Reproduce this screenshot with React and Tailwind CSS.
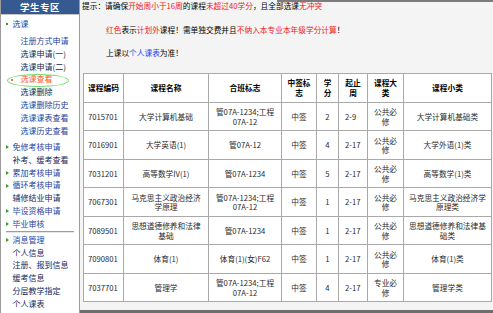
const FONT = "font-['Noto_Sans_CJK_SC','Noto_Sans',sans-serif]";

const rows = [
    ["7015701", "大学计算机基础", ["管07A-1234;工程", "07A-12"], "中签", "2", "2-9", "公共必修", ["大学计算机基础类"]],
    ["7016901", "大学英语(1)", ["管07A-12"], "中签", "4", "2-17", "公共必修", ["大学外语(1)类"]],
    ["7031201", "高等数学IV(1)", ["管07A-1234"], "中签", "5", "2-17", "公共必修", ["高等数学(1)类"]],
    ["7067301", ["马克思主义政治经济", "学原理"], ["管07A-1234;工程", "07A-12"], "中签", "1", "2-17", "公共必修", ["马克思主义政治经济学", "原理类"]],
    ["7089501", ["思想道德修养和法律", "基础"], ["管07A-1234"], "中签", "1", "2-17", "公共必修", ["思想道德修养和法律基", "础类"]],
    ["7090801", "体育(1)", ["体育(1)(女)F62"], "中签", "1", "2-17", "公共必修", ["体育(1)类"]],
    ["7037701", "管理学", ["管07A-1234;工程", "07A-12"], "中签", "4", "2-17", "专业必修", ["管理学类"]],
];

const Lines = ({ value }) => {
    const list = Array.isArray(value) ? value : [value];
    return list.map((l, i) => (
        <span key={i}>
            {i > 0 && <br />}
            {l}
        </span>
    ));
};

const Item = ({ children, sub, color = "text-[#1f44a0]", bullet, className = "" }) => (
    <div className={`flex items-center h-[12.8px] leading-[12.8px] whitespace-nowrap ${sub ? "pl-[19.5px]" : "pl-[5px]"} ${color} ${className}`}>
        {bullet === "tri" && (
            <span className="w-0 h-0 mr-[3.5px] border-y-[2.5px] border-y-transparent border-l-[3px] border-l-[#3c9a2c]" />
        )}
        {bullet === "square" && <span className="w-[2px] h-[2px] mr-[4.5px] bg-[#3c9a2c]" />}
        {!bullet && !sub && <span className="w-[6.5px]" />}
        {children}
    </div>
);

const Sidebar = () => (
    <div className="relative w-[80px] shrink-0 bg-white border-l border-r border-[#9c9c9c] text-[8px]">
        <div className="h-[15px] bg-[#365a90] border-b border-[#c4c4c4] text-white text-center font-bold text-[9.5px] leading-[15px] tracking-[0.5px]">
            学生专区
        </div>
        <Item bullet="square" className="mt-[3px]">选课</Item>
        <Item sub className="mt-[4.2px]">注册方式申请</Item>
        <Item sub color="text-[#1a1e3a]">选课申请(一)</Item>
        <Item sub color="text-[#1a1e3a]">选课申请(二)</Item>
        <div className="flex items-center h-[12.8px] leading-[12.8px] pl-[10px] text-[#ff5a1e] whitespace-nowrap">
            <span className="w-[2px] h-[2px] mr-[7.5px] bg-[#f23a2a] rounded-full" />
            选课查看
        </div>
        <Item sub color="text-[#1a1e3a]">选课删除</Item>
        <Item sub>选课删除历史</Item>
        <Item sub>选课课表查看</Item>
        <Item sub>选课历史查看</Item>
        <Item bullet="tri" className="mt-[3.6px]">免修考核申请</Item>
        <Item color="text-[#1a2758]">补考、缓考查看</Item>
        <Item bullet="tri">累加考核申请</Item>
        <Item bullet="tri">循环考核申请</Item>
        <Item color="text-[#1a2758]">辅修结业申请</Item>
        <Item bullet="tri">毕设资格申请</Item>
        <Item bullet="tri">毕业审核</Item>
        <div className="h-[3.2px] flex items-center">
            <div className="mx-[5px] flex-1 border-t border-[#9c9c9c] border-b border-b-[#e6e6e6]" />
        </div>
        <Item bullet="tri">消息管理</Item>
        <Item color="text-[#1a2758]">个人信息</Item>
        <Item color="text-[#1a2758]">注册、报到信息</Item>
        <Item color="text-[#1a2758]">缓考信息</Item>
        <Item color="text-[#1a2758]">分层教学指定</Item>
        <Item color="text-[#1a2758]">个人课表</Item>
        {/* highlight ring */}
        <div className="absolute left-[6px] top-[73.5px] w-[62px] h-[13.5px] rounded-[50%] border border-[#74dc6c]" />
    </div>
);

const th = "border border-[#a9a9a9] bg-white font-bold text-black text-center leading-[9.5px] p-0";
const td = "border border-[#a9a9a9] bg-white text-[#2a2a2a] leading-[9.5px] p-0";

export default function App() {
    return (
        <div className={`relative w-[493px] h-[313px] flex flex-col overflow-hidden bg-[#f4f4f4] ${FONT}`}>
            <div className="absolute top-0 right-0 w-[216px] h-[2px] bg-[#7c7c7c]" />
            <div className="flex flex-1 min-h-0">
                <Sidebar />
                <div className="flex-1 flex flex-col bg-[#f4f4f4] text-[7.7px] text-black">
                    <p className="h-[12px] leading-[12px] pl-[2px] whitespace-nowrap">
                        提示：请确保<span className="text-[#f02020]">开始周小于16周</span>的课程
                        <span className="text-[#f02020]">未超过40学分</span>，且全部选课
                        <span className="text-[#f02020]">无冲突</span>
                    </p>
                    <p className="h-[12px] leading-[12px] mt-[12px] pl-[26px] whitespace-nowrap">
                        <span className="text-[#f02020]">红色</span>表示<span className="text-[#f02020]">计划外</span>
                        课程！需单独交费并且<span className="text-[#f02020]">不纳入本专业本年级学分计算</span>！
                    </p>
                    <p className="h-[12px] leading-[12px] mt-[10.7px] pl-[26px] whitespace-nowrap">
                        上课以<span className="text-[#2a3cf0]">个人课表</span>为准！
                    </p>
                    <table className="mt-[14.3px] ml-[3px] w-[408px] table-fixed border-collapse border border-[#8c8c8c] text-[7.7px]">
                        <colgroup>
                            <col className="w-[40px]" />
                            <col className="w-[85px]" />
                            <col className="w-[73px]" />
                            <col className="w-[35px]" />
                            <col className="w-[22px]" />
                            <col className="w-[29px]" />
                            <col className="w-[36px]" />
                            <col className="w-[88px]" />
                        </colgroup>
                        <thead>
                            <tr className="h-[29px]">
                                <th className={th}>课程编码</th>
                                <th className={th}>课程名称</th>
                                <th className={th}>合班标志</th>
                                <th className={th}>中签标<br />志</th>
                                <th className={th}>学<br />分</th>
                                <th className={th}>起止<br />周</th>
                                <th className={th}>课程大<br />类</th>
                                <th className={th}>课程小类</th>
                            </tr>
                        </thead>
                        <tbody>
                            {rows.map((r) => (
                                <tr key={r[0]} className="h-[28.5px]">
                                    <td className={`${td} pl-[4px]`}>{r[0]}</td>
                                    <td className={`${td} text-center`}><Lines value={r[1]} /></td>
                                    <td className={`${td} text-center`}><Lines value={r[2]} /></td>
                                    <td className={`${td} text-center`}>{r[3]}</td>
                                    <td className={`${td} text-center`}>{r[4]}</td>
                                    <td className={`${td} pl-[6px]`}>{r[5]}</td>
                                    <td className={`${td} text-center`}>{r[6].slice(0, 3)}<br />{r[6].slice(3)}</td>
                                    <td className={`${td} text-center`}><Lines value={r[7]} /></td>
                                </tr>
                            ))}
                        </tbody>
                    </table>
                    <div className="flex-1" />
                    <div className="h-[3px] bg-[#6e6e6e]" />
                </div>
            </div>
        </div>
    );
}
